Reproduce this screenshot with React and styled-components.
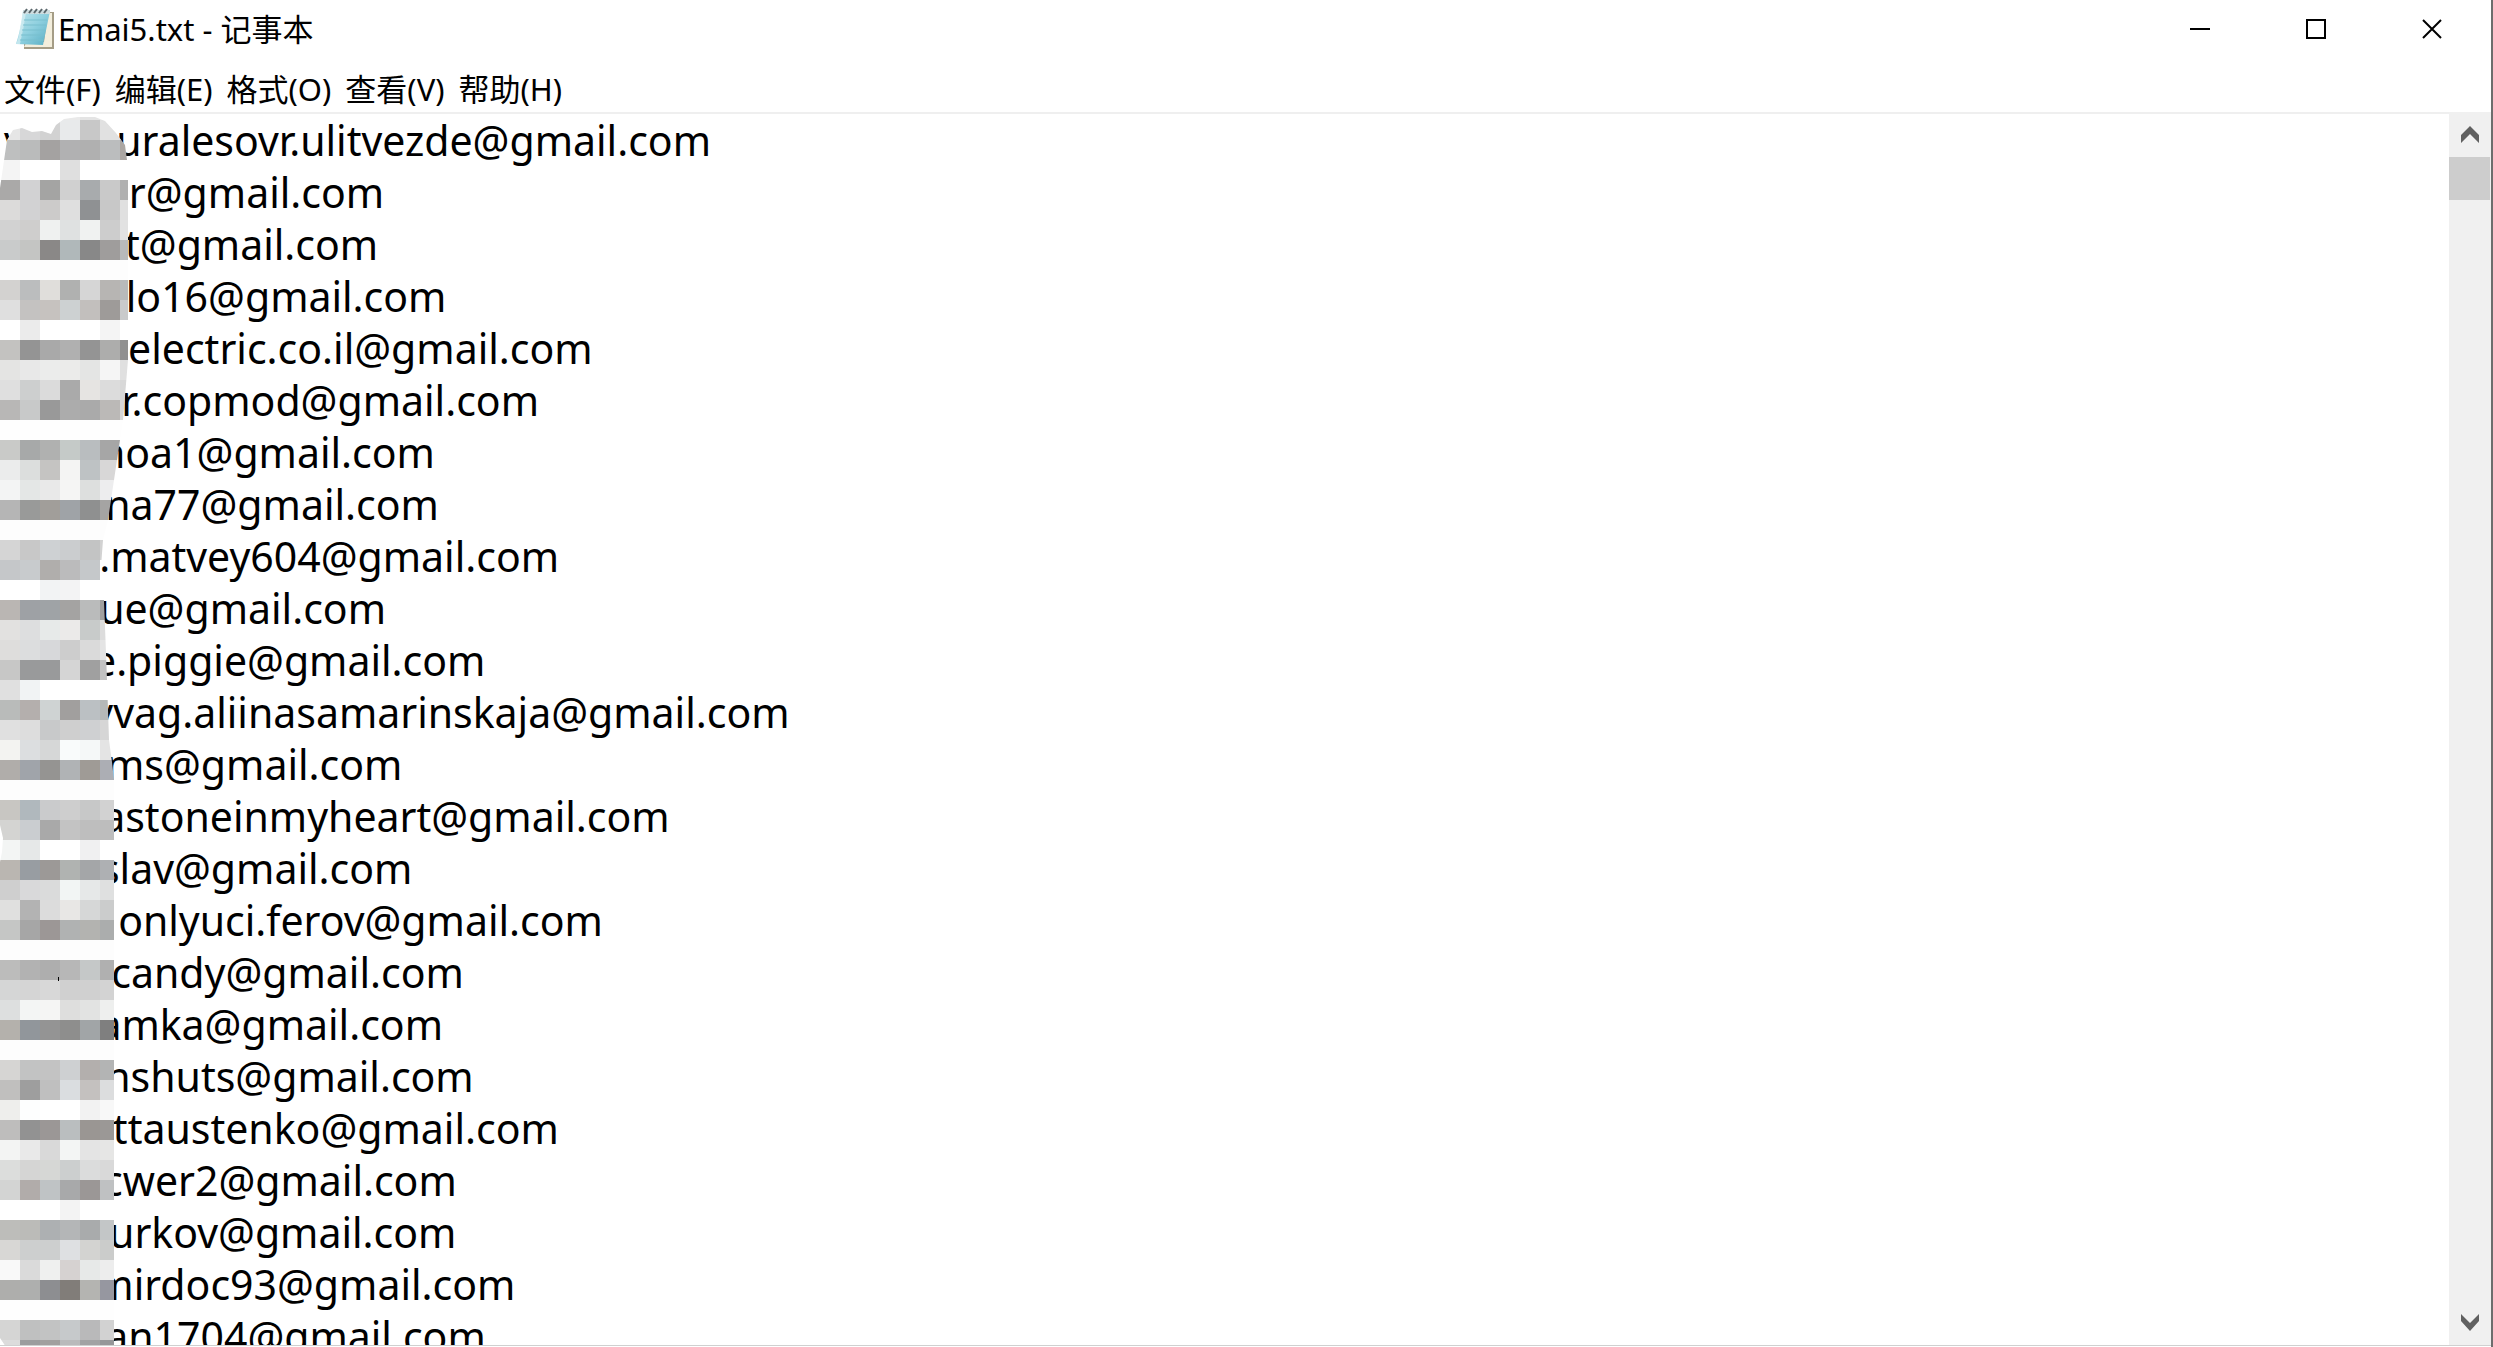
import React, { useState } from 'react';
import styled, { createGlobalStyle } from 'styled-components';

const FONT_SIZE = 41;
const SPACE = 0.26 * FONT_SIZE;
const THIN = FONT_SIZE / 6;
const CELL = 20;

// blank run made of normal and six-per-em spaces, as near to px as they get
function blank(px) {
    let best = '';
    let bestError = px;
    for (let a = 0; a * SPACE <= px + SPACE; a++) {
        const b = Math.max(0, Math.round((px - a * SPACE) / THIN));
        const error = Math.abs(px - a * SPACE - b * THIN);
        if (error < bestError) {
            bestError = error;
            best = ' '.repeat(a) + '\u2006'.repeat(b);
        }
    }
    return best;
}

const lines = [
    ['v', 91, 'uralesovr.ulitvezde'],
    ['', 125, 'r'],
    ['', 121, 't'],
    ['', 122, 'lo16'],
    ['', 124, 'electric.co.il'],
    ['', 117, 'r.copmod'],
    ['', 96, 'hoa1'],
    ['', 101, 'na77'],
    ['', 95, '.matvey604'],
    ['', 95, 'ue'],
    ['', 89, 'e.piggie'],
    ['', 88, 'vvag.aliinasamarinskaja'],
    ['', 102, 'ms'],
    ['', 98, 'astoneinmyheart'],
    ['', 96, 'slav'],
    ['', 114, 'onlyuci.ferov'],
    ['', 107, 'candy'],
    ['', 94, 'amka'],
    ['', 101, 'nshuts'],
    ['', 109, 'ttaustenko'],
    ['', 99, 'cwer2'],
    ['', 105, 'urkov'],
    ['', 91, 'mirdoc93'],
    ['', 101, 'an1704'],
];

const documentText = lines.map(([start, gap, name]) => start + blank(gap) + name + '@gmail.com').join('\n');

const menus = ['文件(F)', '编辑(E)', '格式(O)', '查看(V)', '帮助(H)'];

// one line for each row of blocks, one colour for each block
const mosaic = `
e8e8e8 e8e8e8 e8e8e8 e9e9e9 e4e4e4 e8e8e8 e8e8e8
e6e6e6 d7d7d8 d2d2d2 e8eaeb c8c8c8 e1e1e1 e1e1e1
bebfbf babbbb a4a2a1 b1b1b2 b0b0b0 bbbdbe aba6a2
f4f4f4 ffffff ffffff dfdfdf ffffff ffffff ffffff
aaa9a8 d2d2d3 a4a4a3 d0d0d0 a8abad c9c9c9 b0b0b0
dcdbda d2d2d3 cccbca dfdfdf 8f9193 c8c8c8 e0e0e0
d2d2d2 cfcecd eff1f0 dfe1e1 f0f2f1 cdcdcd e2e2e2
c9cbcb c4c5c3 8a8887 b0b8ba 888888 9f9d9c b8babb
fdfdfd fdfdfd fdfdfd fdfdfd fdfdfd fdfdfd fdfdfd
d3d2d0 bbbdbe e0dedb b0b1b0 d6d6d6 b7b5b3 b8babb
dfdfdf c4c2c1 c6c2bf cdd1d2 c2bfbd 9e9b99 c9cacb
ffffff ebebeb ffffff ffffff ffffff f4f4f4 ffffff
c3c2c0 949494 a9a9a9 b0b0b0 949494 adadac 909090
e4e4e3 e8e8e8 ebeceb ebebea e4e5e4 f5f5f5 e0e0e0
dfdfdf cdcfcf dbdbdb aaaaaa e6e4e2 dcdcdc d8d8d8
b8b7b6 c8c9c9 999999 acacac aaaaaa bbb9b7 d8d8d8
fefefe fefefe fefefe fefefe fefefe fefefe fefefe
c9cac8 a7a9a9 b0b1b0 c5cac8 b9bdbf a6a6a6 a6a6a6
ebecec dcdedd c5c4c2 f4f4f3 bec2c4 d8d7d7 d8d7d7
f3f4f4 e4e7e6 e9e9e9 f5f5f4 dddfde ededee ededee
b5b5b5 999a99 a19e9a 9fa3a7 8f9090 a5a4a3 a5a4a3
fdfdfd fdfdfd fdfdfd fdfdfd fdfdfd fdfdfd fdfdfd
d5d5d5 c8c8c8 ced1d3 cbcdcf c3c4c4 d2d2d2 d2d2d2
c5c7c9 c8cbcd b0aeac bbbbbc c5c8ca ffffff ffffff
ffffff ffffff f2f3f4 f3f3f4 ffffff ffffff ffffff
bab6b3 9ea1a5 9fa3a6 a4a3a2 babbbb a0a0a0 a0a0a0
e2e1e0 dddedf e7eae9 ebeae9 c8cbca dcdcdc dcdcdc
dedddc dcddde d7d8da cdcdcd dadada e4e4e4 e4e4e4
c7c7c6 999a9b 999a9b d5d5d5 a0a0a0 c2c2c2 c2c2c2
e0e0e0 f1f3f4 ffffff ffffff ffffff ffffff ffffff
b9bbba b4afad cfd3d3 a19f9e bbc0c3 b5b8b8 b5b8b8
e0e0e0 dddddd c8c9ca cfcfcf cfd0d2 d6d6d6 d6d6d6
f3f3f1 dcdee0 d6d7d7 f9fbfb f5f8f8 e4e4e4 e4e4e4
b0adaa a0a4aa 959492 b0b3b5 9f9b96 acaeb4 acaeb4
fdfdfd fdfdfd fdfdfd fdfdfd fdfdfd fdfdfd fdfdfd
c8c6c2 b0b8bd cacbcc cecece c7c8c8 d2d2d2 d2d2d2
d4d4d2 cacdd0 a9a9a9 c3c3c3 bebebe bdbdbd bdbdbd
f3f5f4 e6e8e8 ffffff ffffff f0f0f1 ffffff ffffff
bab6b1 989da2 9c9997 b0b3b1 a4a6a8 aeb0b3 aeb0b3
cfcfcf d9d9da dadbdb f2f5f4 e6e8e8 dfe0e0 dfe0e0
e0e0df b3b3b3 dcdcdc e8e7e5 d6d7d7 cbcccc cbcccc
c5c6c5 a6a6a6 9c9796 b0b2b2 b3b3b0 abadad abadad
fdfdfd fdfdfd fdfdfd fdfdfd fdfdfd fdfdfd fdfdfd
bcbcbb b2b2b2 aeaeae b7b7b7 c5c8c8 b0b0b0 b0b0b0
d5d6d6 d5d5d5 d8d8d8 d0d0d0 d0d0d0 d3d3d3 d3d3d3
dddfdf f3f5f4 f5f5f4 dededd e2e3e2 eeefee eeefee
b4b1ac 91969b 949494 8e8e8d a1a5a7 7f7f7f 7f7f7f
fdfdfd fdfdfd fdfdfd fdfdfd fdfdfd fdfdfd fdfdfd
d6d5d3 c2c3c3 c3c3c3 ced0d2 b3afad b3b4b4 b3b4b4
c0bfbe 9e9e9e bfbfbf dadde0 c4c1bf dcddde dcddde
eeeeec fdfefe ffffff ffffff f2f2f2 f8f8f8 f8f8f8
bebdbc 929292 9b9796 babebf 9a9693 9b9896 9b9896
f3f4f3 e9e9e9 d9d9d9 f3f5f4 e4e4e4 e6e6e5 e6e6e5
dcdddc d5d5d4 d6d7d5 cccfcf dbdcdc d9d9d9 d9d9d9
d3d4d3 b1acaa bfc3c5 a8a9aa 9b9796 bfc1c2 bfc1c2
ffffff ffffff ffffff f3f3f3 ffffff ffffff ffffff
bdbdba bbbbb8 adb0b2 b4b6b7 a9abac c3c6c7 c3c6c7
d8d7d5 cdcfcf cdcfcf dee0e2 d3d3d1 cbcccb cbcccb
f9f9f9 dadada eff0ef d6d2d1 e7e9e8 ededed ededed
aeaeac aeafae 8d8e91 817d79 b4b4b1 9697a0 9697a0
fefefe fefefe fefefe fefefe fefefe fefefe fefefe
d5d5d4 bfc0c0 c2c3c3 c6c9cb b9b9ba d2d2d2 d2d2d2
dcdcdc 9b9d9e a2a09f b9babb a2a3a4 969799 969799
`.trim().split('\n').map((row) => row.split(' '));

const GlobalStyle = createGlobalStyle`
    body {
        margin: 0;
        background: #fff;
        overflow: hidden;
    }
    * {
        box-sizing: border-box;
    }
    button {
        display: flex;
        align-items: center;
        justify-content: center;
        padding: 0;
        border: 0;
        background: transparent;
        color: #000;
        font: inherit;
    }
`

const Window = styled.div`
    display: flex;
    flex-direction: column;
    height: 100vh;
    background: #fff;
    border-right: 2px solid #6d6d6d;
    color: #000;
    font-family: "Noto Sans", "Noto Sans CJK SC", sans-serif;
    font-size: 31px;
    line-height: 40px;
`

const TitleBar = styled.header`
    display: flex;
    align-items: stretch;
    height: 58px;
    padding: 0 1px 0 14px;
`

const Title = styled.h1`
    display: flex;
    flex: 1;
    align-items: center;
    gap: 2px;
    margin: 0;
    font-size: 31px;
    font-weight: 400;
`

const WindowButton = styled.button`
    width: 116px;
    &:hover {
        background: ${props => props.$danger ? '#e81123' : '#e5e5e5'};
    }
`

const MenuBar = styled.nav`
    display: flex;
    align-items: center;
    gap: 14px;
    height: 54px;
    padding: 8px 4px 0;
`

const Body = styled.main`
    display: flex;
    flex: 1;
    min-height: 0;
    border-bottom: 1px solid #d0d0d0;
    margin-bottom: 1px;
`

const Editor = styled.div`
    position: relative;
    flex: 1;
    overflow: hidden;
    border-top: 2px solid #efefef;
`

const TextBox = styled.textarea`
    display: block;
    width: 100%;
    height: 100%;
    padding: 0 4px;
    border: 0;
    outline: 0;
    resize: none;
    overflow: hidden;
    white-space: pre;
    background: transparent;
    color: #000;
    font-family: "Noto Sans", sans-serif;
    font-size: ${FONT_SIZE}px;
    line-height: 52px;
`

const Mosaic = styled.svg`
    position: absolute;
    top: 0;
    left: 0;
    pointer-events: none;
`

const ScrollBar = styled.div`
    display: flex;
    flex-direction: column;
    width: 42px;
    background: #f0f0f0;
`

const ScrollButton = styled.button`
    height: 45px;
    flex: none;
`

const Track = styled.div`
    flex: 1;
`

const Thumb = styled.div`
    height: 43px;
    margin-right: 1px;
    background: #cdcdcd;
`

function NotepadIcon() {
    return (
        <svg width="42" height="44" viewBox="0 0 42 44" aria-hidden="true">
            <defs>
                <linearGradient id="page" x1="0" y1="0" x2="1" y2="1">
                    <stop offset="0" stopColor="#c3e6ee" />
                    <stop offset="0.5" stopColor="#8fd0df" />
                    <stop offset="1" stopColor="#55acc2" />
                </linearGradient>
            </defs>
            <path d="M34 5h6v37H10v-5z" fill="#a59d86" />
            <path d="M34 6h4v34H10l2-4 18-1z" fill="#f3eedc" />
            <path d="M9 4h27L29 38L2 37Q7 22 9 4z" fill="url(#page)" />
            <path d="M9 4L6 21Q5 31 2 37L6 37Q10 20 12 5z" fill="#d7eff4" opacity=".7" />
            <path d="M10 13h23M9 18h23M8 23h23M7 28h23M6 33h23" stroke="#79bfce" strokeWidth="1" />
            <path d="M9 3h27v4H9z" fill="#cfdde0" />
            <path d="M10 6l3-4M15 6l3-4M20 6l3-4M25 6l3-4M30 6l3-4" stroke="#59666b" strokeWidth="2" />
        </svg>
    );
}

function Arrow({ down }) {
    return (
        <svg width="18" height="17" viewBox="0 0 18 17" aria-hidden="true">
            <path d={down ? 'M0 0L9 9L18 0V7L9 17L0 7z' : 'M0 17L9 8L18 17V9L9 0L0 9z'} fill="#606060" />
        </svg>
    );
}

function MosaicOverlay() {
    return (
        <Mosaic width="130" height="1233" viewBox="0 114 130 1233" aria-hidden="true">
            <clipPath id="brush">
                <path d="M0 188L7 140L13 130L22 128L32 132L42 131L51 134L56 125L64 119L78 117H95L105 121L116 133L125 145L127 160H128V360L123 420L120 440L108 520L103 540L100 580L104 600L107 680L109 740L112 762L114 780V1347H6L0 1338V862L2 852L3 838L0 825z" />
            </clipPath>
            <g clipPath="url(#brush)" shapeRendering="crispEdges">
                {mosaic.map((row, y) => row.map((color, x) => (
                    <rect key={`${x}-${y}`} x={x * CELL} y={100 + y * CELL} width={CELL} height={CELL} fill={`#${color}`} />
                )))}
            </g>
            <rect x="58" y="977" width="1" height="4" fill="#000" />
        </Mosaic>
    );
}

function App() {
    const [text, setText] = useState(documentText);

    return (
        <>
            <GlobalStyle />
            <Window>
                <TitleBar>
                    <Title>
                        <NotepadIcon />
                        Emai5.txt - 记事本
                    </Title>
                    <WindowButton aria-label="最小化">
                        <svg width="20" height="20"><path d="M0 10h20" stroke="#000" strokeWidth="2" /></svg>
                    </WindowButton>
                    <WindowButton aria-label="最大化">
                        <svg width="20" height="20"><path d="M1 1h18v18H1z" fill="none" stroke="#000" strokeWidth="2" /></svg>
                    </WindowButton>
                    <WindowButton $danger aria-label="关闭">
                        <svg width="20" height="20"><path d="M1 1l18 18M19 1L1 19" stroke="#000" strokeWidth="2" /></svg>
                    </WindowButton>
                </TitleBar>
                <MenuBar>
                    {menus.map((menu) => <button key={menu}>{menu}</button>)}
                </MenuBar>
                <Body>
                    <Editor>
                        <TextBox
                            aria-label="Emai5.txt"
                            spellCheck={false}
                            value={text}
                            onChange={(e) => setText(e.target.value)}
                        />
                        <MosaicOverlay />
                    </Editor>
                    <ScrollBar>
                        <ScrollButton aria-label="向上"><Arrow /></ScrollButton>
                        <Track><Thumb /></Track>
                        <ScrollButton aria-label="向下"><Arrow down /></ScrollButton>
                    </ScrollBar>
                </Body>
            </Window>
        </>
    );
}

export default App;
